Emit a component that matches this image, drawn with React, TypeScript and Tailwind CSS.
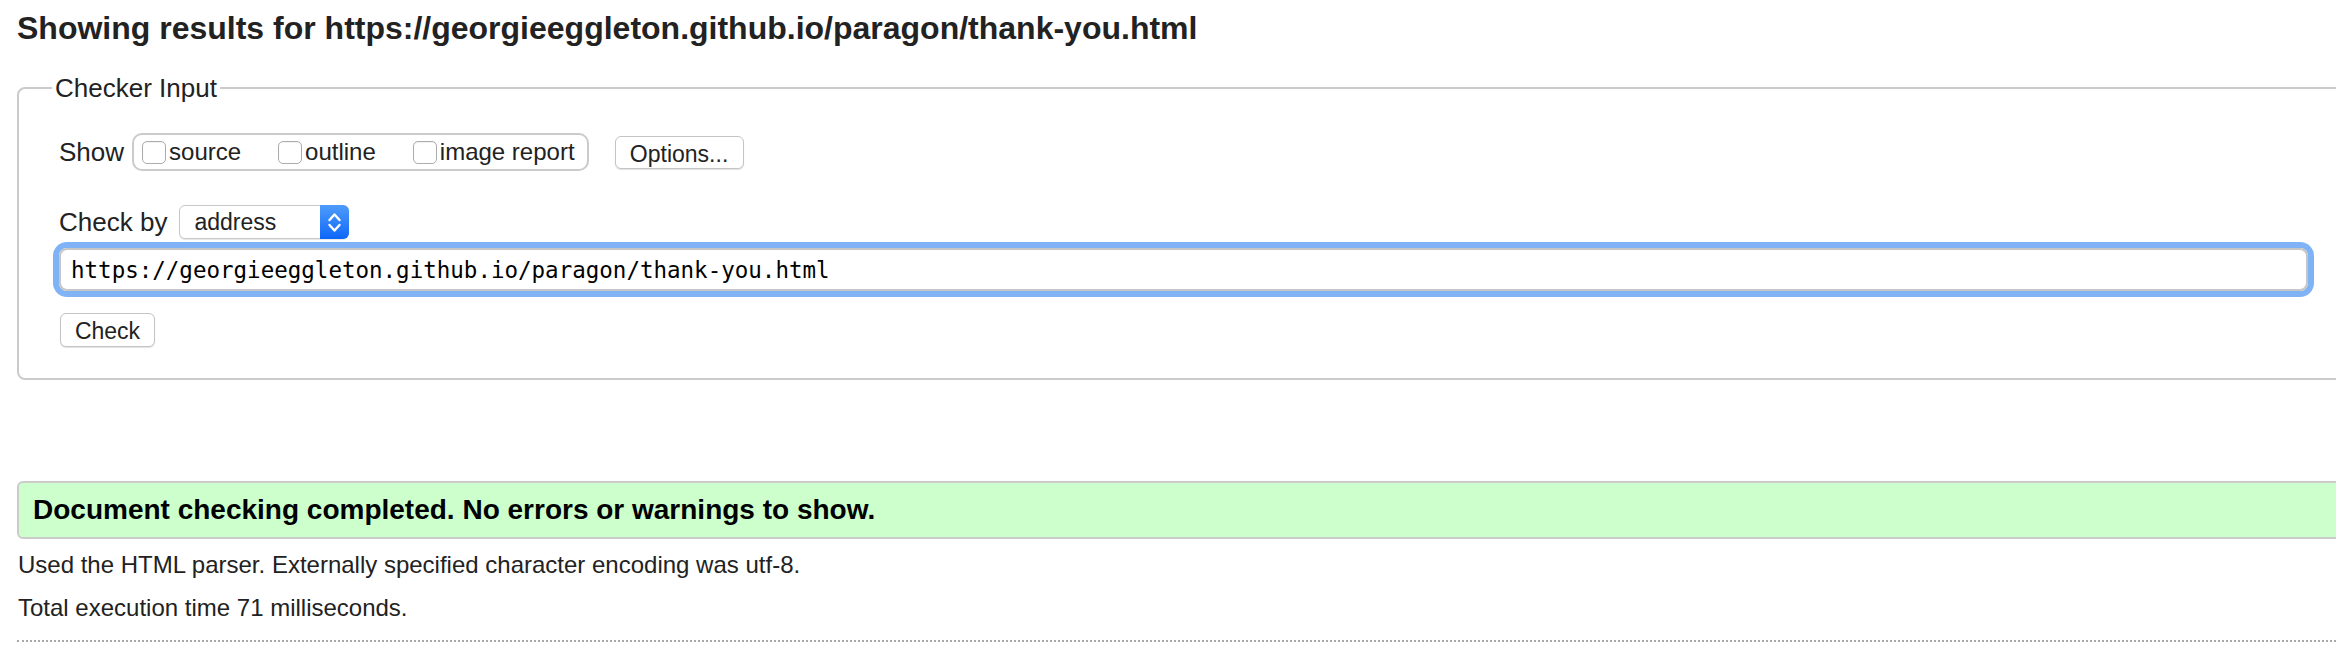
import { useState } from "react";

function Check({ label }: { label: string }) {
  const [on, setOn] = useState(false);
  return (
    <label className="flex items-center">
      <input
        type="checkbox"
        checked={on}
        onChange={(e) => setOn(e.target.checked)}
        className="appearance-none w-[24px] h-[23px] border border-[#acacac] rounded-[5px] bg-white shadow-[inset_0_1px_1px_rgba(0,0,0,0.06)]"
      />
      <span className="ml-[3px] text-[24px] leading-[28px]">{label}</span>
    </label>
  );
}

export default function App() {
  const [url, setUrl] = useState("https://georgieeggleton.github.io/paragon/thank-you.html");

  return (
    <div className="w-full min-h-[646px] overflow-hidden bg-white text-[#222] font-['Liberation_Sans',Arial,sans-serif]">
      <div className="w-[2400px] pl-[17px] pt-[10px]">
        <h2 className="text-[32px] leading-[36px] font-bold">
          Showing results for https://georgieeggleton.github.io/paragon/thank-you.html
        </h2>

        <fieldset className="mt-[27px] border-2 border-[#cbcbcb] rounded-[8px] pl-[40px] pt-[30px] pb-[31px]">
          <legend className="-ml-[7px] px-[3px] text-[26px] leading-[30px]">Checker Input</legend>

          <div className="flex items-center h-[38px]">
            <span className="text-[26px]">Show</span>
            <div className="ml-[8px] flex items-center gap-[37px] h-[38px] border-2 border-[#cbcbcb] rounded-[10px] pl-[8px] pr-[12px]">
              <Check label="source" />
              <Check label="outline" />
              <Check label="image report" />
            </div>
            <button className="ml-[26px] w-[129px] h-[33px] border border-[#c4c4c4] rounded-[6px] bg-white text-[23px] shadow-[0_1px_1px_rgba(0,0,0,0.12)]">
              Options...
            </button>
          </div>

          <div className="flex items-center h-[34px] mt-[34px]">
            <span className="text-[26px]">Check by</span>
            <div className="ml-[12px] flex w-[170px] h-[34px] border border-[#c8c8c8] rounded-[6px] bg-white shadow-[0_1px_1px_rgba(0,0,0,0.1)]">
              <span className="flex-1 flex items-center pl-[14px] text-[23px]">address</span>
              <span className="w-[29px] -my-px -mr-px rounded-r-[6px] bg-gradient-to-b from-[#4d9bfa] to-[#0b66f8] flex items-center justify-center">
                <svg width="29" height="34" viewBox="0 0 29 34" fill="none" stroke="white" strokeWidth="2.4" strokeLinecap="round" strokeLinejoin="round">
                  <polyline points="9.5,15 14.5,9.5 19.5,15" />
                  <polyline points="9.5,20 14.5,25.5 19.5,20" />
                </svg>
              </span>
            </div>
          </div>

          <input
            type="text"
            value={url}
            onChange={(e) => setUrl(e.target.value)}
            className="block mt-[9px] w-[2249px] h-[43px] border-2 border-[#c6c6c6] rounded-[8px] ring-[6px] ring-[#80b3f6] px-[10px] text-black outline-none font-['DejaVu_Sans_Mono',monospace] text-[22.5px]"
          />

          <button className="block mt-[22px] ml-px w-[95px] h-[34px] border border-[#c4c4c4] rounded-[6px] bg-white text-[23px] shadow-[0_1px_1px_rgba(0,0,0,0.12)]">
            Check
          </button>
        </fieldset>

        <div className="mt-[101px] h-[58px] flex items-center border-2 border-[#cbcbcb] rounded-[6px] bg-[#ccffcc] px-[14px]">
          <p className="text-[28px] font-bold text-black">Document checking completed. No errors or warnings to show.</p>
        </div>

        <p className="mt-[4px] pl-px text-[24px] leading-[43px]">
          Used the HTML parser. Externally specified character encoding was utf-8.
        </p>
        <p className="pl-px text-[24px] leading-[43px]">Total execution time 71 milliseconds.</p>

        <div className="mt-[11px] border-t-2 border-dotted border-[#a8a8a8]" />
      </div>
    </div>
  );
}
